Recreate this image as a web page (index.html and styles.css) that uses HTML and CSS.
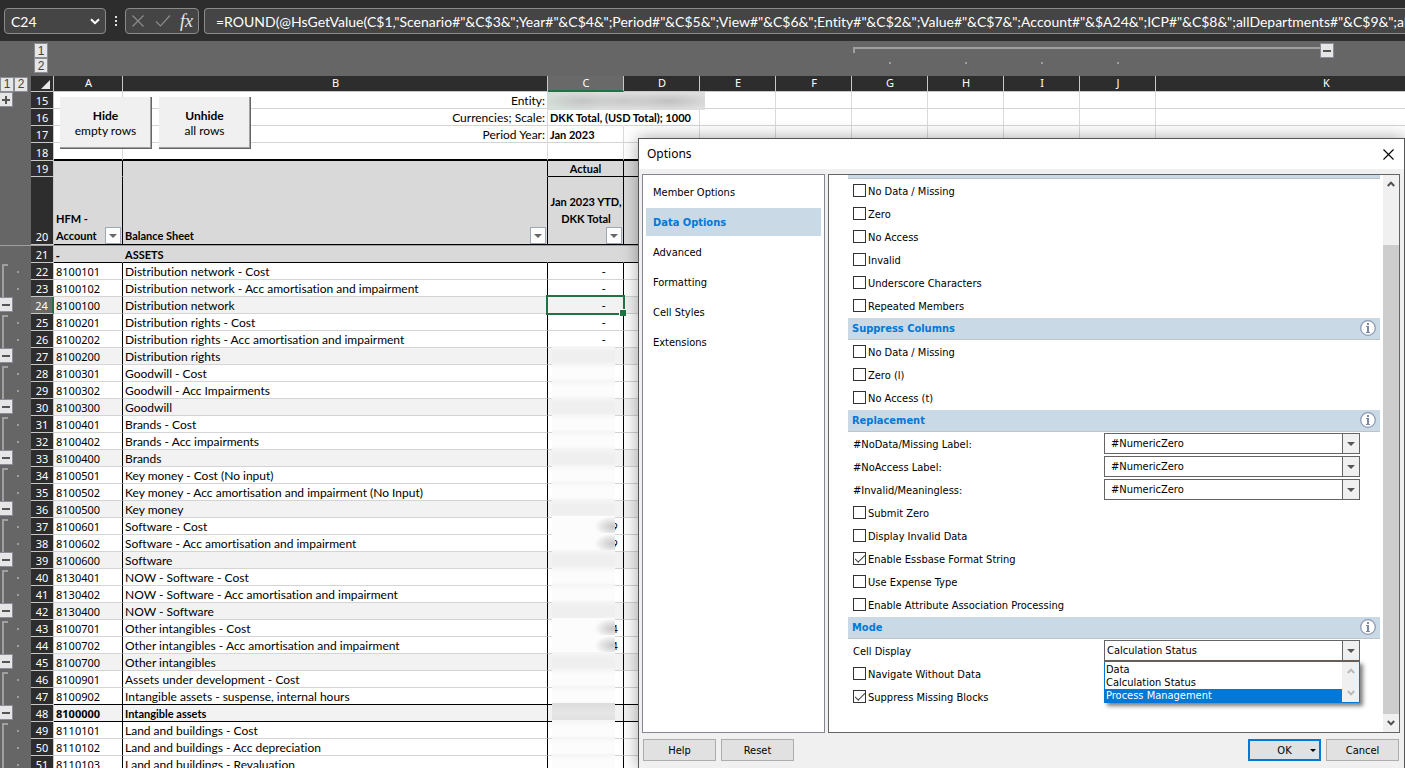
FILE: index.html
```html
<!DOCTYPE html>
<html lang="en">
<head>
<meta charset="utf-8">
<title>Balance Sheet - Options</title>
<link rel="stylesheet" href="styles.css">
</head>
<body>
<svg class="defs" aria-hidden="true">
  <symbol id="info" viewBox="0 0 16 16"><circle cx="8" cy="8" r="7.3" fill="#fff" stroke="#8f9bb3" stroke-width="1.3"/><path d="M7 3h2v2H7zM6 6h3v6h1v1H6v-1h1V7H6z" fill="#7b88a6"/></symbol>
  <symbol id="up" viewBox="0 0 8 6"><path d="M0.8 5L4 1.6L7.2 5" fill="none" stroke="currentColor" stroke-width="2"/></symbol>
  <symbol id="down" viewBox="0 0 8 6"><path d="M0.8 1L4 4.4L7.2 1" fill="none" stroke="currentColor" stroke-width="2"/></symbol>
</svg>
<div class="app">
<header class="formula-bar">
  <div class="box name-box"><input type="text" value="C24" aria-label="Name box"><svg width="10" height="7" viewBox="0 0 10 7"><path d="M1 1.2L5 5.2L9 1.2" fill="none" stroke="#fff" stroke-width="2"/></svg></div>
  <svg class="grip" width="3" height="12" viewBox="0 0 3 12"><path d="M0 0h2v2H0zM0 4h2v2H0zM0 8h2v2H0z" fill="#e0e0e0"/></svg>
  <div class="box fx-box">
    <button type="button" aria-label="Cancel entry"><svg width="14" height="14" viewBox="0 0 14 14"><path d="M1.5 1.5L12.5 12.5M12.5 1.5L1.5 12.5" stroke="#8c8c8c" stroke-width="1.2"/></svg></button>
    <button type="button" aria-label="Enter"><svg width="16" height="14" viewBox="0 0 16 14"><path d="M1 7.5L5.5 12L15 1.5" fill="none" stroke="#8c8c8c" stroke-width="1.2"/></svg></button>
    <button type="button" class="fx">fx</button>
  </div>
  <div class="box formula"><input type="text" aria-label="Formula" value="=ROUND(@HsGetValue(C$1,&quot;Scenario#&quot;&amp;C$3&amp;&quot;;Year#&quot;&amp;C$4&amp;&quot;;Period#&quot;&amp;C$5&amp;&quot;;View#&quot;&amp;C$6&amp;&quot;;Entity#&quot;&amp;C$2&amp;&quot;;Value#&quot;&amp;C$7&amp;&quot;;Account#&quot;&amp;$A24&amp;&quot;;ICP#&quot;&amp;C$8&amp;&quot;;allDepartments#&quot;&amp;C$9&amp;&quot;;allMovements"></div>
</header>

<main class="sheet">
<table class="grid">
<colgroup><col class="w-gut"><col class="w-num"><col class="w-a"><col class="w-b"><col class="w-c"><col class="w-c"><col class="w-c"><col class="w-c"><col class="w-c"><col class="w-c"><col class="w-c"><col class="w-c"><col class="w-k"></colgroup>
<thead>
<tr class="levels"><td></td><td><button type="button" class="lvl">1</button><button type="button" class="lvl">2</button></td><td></td><td></td><td></td><td></td><td></td><td></td><td class="span first"></td><td class="span"></td><td class="span"></td><td class="span"></td><td class="span-end"><button type="button" class="lvl minus" aria-label="Collapse columns"></button></td></tr>
<tr class="cols"><td class="row-levels"><button type="button" class="lvl">1</button><button type="button" class="lvl">2</button></td><th class="corner"><svg width="9" height="9" viewBox="0 0 9 9"><path d="M9 0V9H0z" fill="#e8e8e8"/></svg></th><th>A</th><th>B</th><th class="sel">C</th><th>D</th><th>E</th><th>F</th><th>G</th><th>H</th><th>I</th><th>J</th><th>K</th></tr>
</thead>
<tbody>
<tr><td class="gut"><button type="button" class="lvl plus" aria-label="Expand rows"></button></td><th>15</th><td></td><td class="right">Entity:</td><td class="masked-cell"><span class="mask-entity"></span></td><td></td><td></td><td></td><td></td><td></td><td></td><td></td><td></td></tr>
<tr><td class="gut"></td><th>16</th><td></td><td class="right">Currencies; Scale:</td><td class="strong spill">DKK Total, (USD Total); 1000</td><td></td><td></td><td></td><td></td><td></td><td></td><td></td><td></td></tr>
<tr><td class="gut"></td><th>17</th><td></td><td class="right">Period Year:</td><td class="strong">Jan 2023</td><td></td><td></td><td></td><td></td><td></td><td></td><td></td><td></td></tr>
<tr class="r18"><td class="gut"></td><th>18</th><td></td><td></td><td></td><td></td><td></td><td></td><td></td><td></td><td></td><td></td><td></td></tr>
<tr class="head r19"><td class="gut"></td><th>19</th><td></td><td></td><td class="mid lined">Actual</td><td class="lined"></td><td colspan="7"></td></tr>
<tr class="head r20"><td class="gut"></td><th>20</th><td><div class="title"><span>HFM -<br>Account</span><button type="button" class="filter" aria-label="Filter account"></button></div></td><td><div class="title"><span>Balance Sheet</span><button type="button" class="filter" aria-label="Filter balance sheet"></button></div></td><td class="mid"><div class="stack"><span>Jan 2023 YTD,<br>DKK Total</span><button type="button" class="filter" aria-label="Filter actual"></button></div></td><td></td><td colspan="7"></td></tr>
<tr class="freeze"><td colspan="13"></td></tr>
<tr class="section"><td class="gut"></td><th>21</th><td>-</td><td>ASSETS</td><td></td><td></td><td colspan="7"></td></tr>
<tr><td class="gut s"></td><th>22</th><td>8100101</td><td>Distribution network - Cost</td><td>-</td><td></td><td colspan="7"></td></tr>
<tr><td class="gut m"></td><th>23</th><td>8100102</td><td>Distribution network - Acc amortisation and impairment</td><td>-</td><td></td><td colspan="7"></td></tr>
<tr class="sub current"><td class="gut"><button type="button" class="lvl minus" aria-label="Collapse"></button></td><th>24</th><td>8100100</td><td>Distribution network</td><td class="active">-</td><td></td><td colspan="7"></td></tr>
<tr><td class="gut s"></td><th>25</th><td>8100201</td><td>Distribution rights - Cost</td><td>-</td><td></td><td colspan="7"></td></tr>
<tr><td class="gut m"></td><th>26</th><td>8100202</td><td>Distribution rights - Acc amortisation and impairment</td><td>-</td><td></td><td colspan="7"></td></tr>
<tr class="sub"><td class="gut"><button type="button" class="lvl minus" aria-label="Collapse"></button></td><th>27</th><td>8100200</td><td>Distribution rights</td><td><span class="mask"></span></td><td></td><td colspan="7"></td></tr>
<tr><td class="gut s"></td><th>28</th><td>8100301</td><td>Goodwill - Cost</td><td><span class="mask"></span></td><td></td><td colspan="7"></td></tr>
<tr><td class="gut m"></td><th>29</th><td>8100302</td><td>Goodwill - Acc Impairments</td><td><span class="mask"></span></td><td></td><td colspan="7"></td></tr>
<tr class="sub"><td class="gut"><button type="button" class="lvl minus" aria-label="Collapse"></button></td><th>30</th><td>8100300</td><td>Goodwill</td><td><span class="mask"></span></td><td></td><td colspan="7"></td></tr>
<tr><td class="gut s"></td><th>31</th><td>8100401</td><td>Brands - Cost</td><td><span class="mask"></span></td><td></td><td colspan="7"></td></tr>
<tr><td class="gut m"></td><th>32</th><td>8100402</td><td>Brands - Acc impairments</td><td><span class="mask"></span></td><td></td><td colspan="7"></td></tr>
<tr class="sub"><td class="gut"><button type="button" class="lvl minus" aria-label="Collapse"></button></td><th>33</th><td>8100400</td><td>Brands</td><td><span class="mask"></span></td><td></td><td colspan="7"></td></tr>
<tr><td class="gut s"></td><th>34</th><td>8100501</td><td>Key money - Cost (No input)</td><td><span class="mask"></span></td><td></td><td colspan="7"></td></tr>
<tr><td class="gut m"></td><th>35</th><td>8100502</td><td>Key money - Acc amortisation and impairment (No Input)</td><td><span class="mask"></span></td><td></td><td colspan="7"></td></tr>
<tr class="sub"><td class="gut"><button type="button" class="lvl minus" aria-label="Collapse"></button></td><th>36</th><td>8100500</td><td>Key money</td><td><span class="mask"></span></td><td></td><td colspan="7"></td></tr>
<tr><td class="gut s"></td><th>37</th><td>8100601</td><td>Software - Cost</td><td class="val"><span class="mask smudge"></span>9</td><td></td><td colspan="7"></td></tr>
<tr><td class="gut m"></td><th>38</th><td>8100602</td><td>Software - Acc amortisation and impairment</td><td class="val"><span class="mask smudge"></span>9</td><td></td><td colspan="7"></td></tr>
<tr class="sub"><td class="gut"><button type="button" class="lvl minus" aria-label="Collapse"></button></td><th>39</th><td>8100600</td><td>Software</td><td><span class="mask"></span></td><td></td><td colspan="7"></td></tr>
<tr><td class="gut s"></td><th>40</th><td>8130401</td><td>NOW - Software - Cost</td><td><span class="mask"></span></td><td></td><td colspan="7"></td></tr>
<tr><td class="gut m"></td><th>41</th><td>8130402</td><td>NOW - Software - Acc amortisation and impairment</td><td><span class="mask"></span></td><td></td><td colspan="7"></td></tr>
<tr class="sub"><td class="gut"><button type="button" class="lvl minus" aria-label="Collapse"></button></td><th>42</th><td>8130400</td><td>NOW - Software</td><td><span class="mask"></span></td><td></td><td colspan="7"></td></tr>
<tr><td class="gut s"></td><th>43</th><td>8100701</td><td>Other intangibles - Cost</td><td class="val"><span class="mask smudge"></span>4</td><td></td><td colspan="7"></td></tr>
<tr><td class="gut m"></td><th>44</th><td>8100702</td><td>Other intangibles - Acc amortisation and impairment</td><td class="val"><span class="mask smudge"></span>4</td><td></td><td colspan="7"></td></tr>
<tr class="sub"><td class="gut"><button type="button" class="lvl minus" aria-label="Collapse"></button></td><th>45</th><td>8100700</td><td>Other intangibles</td><td><span class="mask"></span></td><td></td><td colspan="7"></td></tr>
<tr><td class="gut s"></td><th>46</th><td>8100901</td><td>Assets under development - Cost</td><td><span class="mask"></span></td><td></td><td colspan="7"></td></tr>
<tr class="before-total"><td class="gut m"></td><th>47</th><td>8100902</td><td>Intangible assets - suspense, internal hours</td><td><span class="mask"></span></td><td></td><td colspan="7"></td></tr>
<tr class="sub total"><td class="gut"><button type="button" class="lvl minus" aria-label="Collapse"></button></td><th>48</th><td>8100000</td><td>Intangible assets</td><td><span class="mask"></span></td><td></td><td colspan="7"></td></tr>
<tr><td class="gut s"></td><th>49</th><td>8110101</td><td>Land and buildings - Cost</td><td><span class="mask"></span></td><td></td><td colspan="7"></td></tr>
<tr><td class="gut m"></td><th>50</th><td>8110102</td><td>Land and buildings - Acc depreciation</td><td><span class="mask"></span></td><td></td><td colspan="7"></td></tr>
<tr><td class="gut m"></td><th>51</th><td>8110103</td><td>Land and buildings - Revaluation</td><td><span class="mask"></span></td><td></td><td colspan="7"></td></tr>
</tbody>
</table>
<div class="macros">
  <button type="button"><b>Hide</b><span>empty rows</span></button>
  <button type="button"><b>Unhide</b><span>all rows</span></button>
</div>
</main>

<section class="dialog" role="dialog" aria-labelledby="dlg-title">
  <div class="titlebar"><h1 id="dlg-title">Options</h1><button type="button" aria-label="Close"><svg width="11" height="11" viewBox="0 0 11 11"><path d="M.5 .5L10.500 10.500M10.500 .5L.5 10.500" stroke="#000" stroke-width="1.1"/></svg></button></div>
  <div class="panes">
    <nav class="tabs">
      <button type="button">Member Options</button>
      <button type="button" class="on">Data Options</button>
      <button type="button">Advanced</button>
      <button type="button">Formatting</button>
      <button type="button">Cell Styles</button>
      <button type="button">Extensions</button>
    </nav>
    <div class="pane">
      <div class="content">
        <div class="band-edge"></div>
        <label class="opt"><input type="checkbox"><span>No Data / Missing</span></label>
        <label class="opt"><input type="checkbox"><span>Zero</span></label>
        <label class="opt"><input type="checkbox"><span>No Access</span></label>
        <label class="opt"><input type="checkbox"><span>Invalid</span></label>
        <label class="opt"><input type="checkbox"><span>Underscore Characters</span></label>
        <label class="opt"><input type="checkbox"><span>Repeated Members</span></label>
        <div class="band"><h2>Suppress Columns</h2><svg class="info"><use href="#info"/></svg></div>
        <label class="opt"><input type="checkbox"><span>No Data / Missing</span></label>
        <label class="opt"><input type="checkbox"><span>Zero (l)</span></label>
        <label class="opt"><input type="checkbox"><span>No Access (t)</span></label>
        <div class="band"><h2>Replacement</h2><svg class="info"><use href="#info"/></svg></div>
        <div class="field"><label for="nodata">#NoData/Missing Label:</label><div class="combo"><select id="nodata" class="inset"><option>#NumericZero</option></select></div></div>
        <div class="field"><label for="noaccess">#NoAccess Label:</label><div class="combo"><select id="noaccess" class="inset"><option>#NumericZero</option></select></div></div>
        <div class="field"><label for="invalid">#Invalid/Meaningless:</label><div class="combo"><select id="invalid" class="inset"><option>#NumericZero</option></select></div></div>
        <label class="opt"><input type="checkbox"><span>Submit Zero</span></label>
        <label class="opt"><input type="checkbox"><span>Display Invalid Data</span></label>
        <label class="opt"><input type="checkbox" checked><span>Enable Essbase Format String</span></label>
        <label class="opt"><input type="checkbox"><span>Use Expense Type</span></label>
        <label class="opt"><input type="checkbox"><span>Enable Attribute Association Processing</span></label>
        <div class="band"><h2>Mode</h2><svg class="info"><use href="#info"/></svg></div>
        <div class="field"><label for="display">Cell Display</label><div class="combo"><select id="display"><option>Calculation Status</option></select>
          <div class="dropdown"><ul role="listbox" aria-label="Cell Display"><li role="option">Data</li><li role="option">Calculation Status</li><li role="option" aria-selected="true">Process Management</li></ul><div class="mini-scroll"><svg><use href="#up"/></svg><svg><use href="#down"/></svg></div></div></div></div>
        <label class="opt"><input type="checkbox"><span>Navigate Without Data</span></label>
        <label class="opt"><input type="checkbox" checked><span>Suppress Missing Blocks</span></label>
      </div>
      <div class="scrollbar"><svg><use href="#up"/></svg><div class="thumb"></div><svg><use href="#down"/></svg></div>
    </div>
  </div>
  <footer class="actions">
    <button type="button">Help</button><button type="button">Reset</button>
    <span class="spacer"></span>
    <button type="button" class="ok">OK</button><button type="button">Cancel</button>
  </footer>
</section>
</div>
</body>
</html>
```
FILE: styles.css
```css
* { box-sizing: border-box; }
body { margin: 0; background: #666; color: #000; overflow: hidden; }
button, input, select { font: inherit; color: inherit; margin: 0; }
.defs { display: none; }
.app { position: relative; height: 100vh; display: flex; flex-direction: column; overflow: hidden; font-variant-ligatures: none; }

/* Formula bar */
.formula-bar { flex: none; display: flex; align-items: center; gap: 5px; height: 41px; padding: 1px 0 0 4px; background: #2d2d2d; color: #fff; font: 14px Lato, sans-serif; font-variant-ligatures: none; }
.box { display: flex; align-items: center; height: 26px; border: 1px solid #8a8a8a; border-radius: 4px; background: #454545; }
.box input { width: 100%; min-width: 0; border: 0; padding: 0; background: none; outline: 0; font-variant-ligatures: none; }
.name-box { width: 102px; padding: 0 5px 0 6px; }
.name-box svg { flex: none; }
.grip { flex: none; margin: 2px 2px 0 4px; }
.fx-box { width: 74px; padding: 0 5px; justify-content: space-between; }
.fx-box button { display: flex; border: 0; padding: 0; background: none; }
.fx-box .fx { color: #e8e8e8; font: italic 18px/22px "Liberation Serif", serif; }
.formula { flex: 1; min-width: 0; border-right: 0; border-radius: 4px 0 0 4px; padding-left: 11px; }

/* Worksheet */
.sheet { flex: 1; position: relative; overflow: hidden; background: #666; }
.grid { width: 1497px; table-layout: fixed; border-collapse: separate; border-spacing: 0; font: 12px/15px Lato, sans-serif; font-variant-ligatures: none; }
.w-gut { width: 31px; }
.w-num { width: 23px; }
.w-a { width: 69px; }
.w-b { width: 425px; }
.w-c { width: 76px; }
.w-k { width: 341px; }
.grid td { height: 17px; padding: 0 2px 0 2px; border-right: 1px solid #dadada; border-bottom: 1px solid #d4d4d4; background: #fff; white-space: nowrap; }
.grid th { height: 17px; padding: 0; border-right: 1px solid #c8c8c8; border-bottom: 1px solid #c8c8c8; background: #2d2d2d; color: #fff; font: 11px/14px "Noto Sans", sans-serif; vertical-align: bottom; }
.lvl { display: block; width: 14px; height: 15px; padding: 0; border: 1px solid #8a8d96; background: #e6e6e6; color: #444; font: 12px/12px "Liberation Sans", sans-serif; text-align: center; }
.lvl.minus { background: linear-gradient(#555, #555) center / 8px 2px no-repeat #e6e6e6; }
.lvl.plus { background: linear-gradient(#555, #555) center / 8px 2px no-repeat, linear-gradient(#555, #555) center / 2px 8px no-repeat #e6e6e6; }

.grid .levels td { height: 35px; padding: 2px 0 0 3px; border: 0; background: #666; vertical-align: top; }
.grid .levels td.span { background: linear-gradient(#a0a0a0, #a0a0a0) 0 6px / 100% 2px no-repeat, linear-gradient(#a0a0a0, #a0a0a0) 50% 21px / 2px 2px no-repeat #666; }
.grid .levels td.first { background: linear-gradient(#a0a0a0, #a0a0a0) 1px 6px / 100% 2px no-repeat, linear-gradient(#a0a0a0, #a0a0a0) 1px 6px / 2px 6px no-repeat, linear-gradient(#a0a0a0, #a0a0a0) 50% 21px / 2px 2px no-repeat #666; }
.grid .levels td.span-end { padding: 2px 0 0; background: linear-gradient(#a0a0a0, #a0a0a0) 0 6px / 50% 2px no-repeat #666; }
.span-end .lvl { margin: 0 auto; }
.grid .cols td { border: 0; background: #666; padding: 0; }
.grid .cols td, .grid .cols th { height: 16px; }
.grid .cols th { padding-left: 1px; line-height: 13px; vertical-align: top; }
.row-levels .lvl { float: left; }
.grid .cols th.sel { background: #696969; border-bottom: 2px solid #217346; }
.grid .cols .corner { padding: 4px 3px 0 0; line-height: 9px; }
.corner svg { display: block; margin-left: auto; }

.grid td.gut { padding: 0; border: 0; background: #666; vertical-align: top; }
.gut .lvl { width: 13px; border-left: 0; }
.grid td.gut.s { background: linear-gradient(#a0a0a0, #a0a0a0) 2px 1px / 2px 100% no-repeat, linear-gradient(#a0a0a0, #a0a0a0) 2px 1px / 6px 2px no-repeat, linear-gradient(#a0a0a0, #a0a0a0) 17px 8px / 2px 2px no-repeat #666; }
.grid td.gut.m { background: linear-gradient(#a0a0a0, #a0a0a0) 2px 0 / 2px 100% no-repeat, linear-gradient(#a0a0a0, #a0a0a0) 17px 8px / 2px 2px no-repeat #666; }

.grid .right { text-align: right; }
.grid .strong, .head td, .section td { font-size: 11px; font-weight: bold; }
.grid .spill { border-right-color: transparent; overflow: visible; }
.grid .r18 td:not(.gut) { height: 18px; border-bottom: 2px solid #000; }
.grid .head td:not(.gut) { background: #d9d9d9; border-right-color: #000; border-bottom-color: #d9d9d9; }
.grid .r19 td, .grid .r19 th { height: 16px; }
.grid .head td.lined { border-bottom-color: #000; }
.mid { text-align: center; }
.grid .r20 td:not(.gut) { height: 68px; padding: 0 1px 0 2px; border-bottom-color: #000; vertical-align: bottom; }
.title { display: flex; align-items: flex-end; justify-content: space-between; line-height: 17px; }
.stack { display: flex; flex-direction: column; align-items: center; line-height: 17px; }
.filter { flex: none; width: 16px; height: 17px; padding: 0; border: 1px solid #a0a7b4; background: #fcfcfc; display: grid; place-items: center; }
.filter::after { content: ""; border: 4px solid transparent; border-top-color: #666; border-bottom: 0; }
.stack .filter { align-self: flex-end; }
.grid .freeze td { height: 1px; padding: 0; border: 0; background: #a0a0a0; }
.grid .section td:not(.gut) { background: #d9d9d9; border-right-color: #d9d9d9; border-bottom-color: #000; }

.freeze ~ tr td:nth-child(3) { font-family: "Noto Sans", sans-serif; font-size: 11px; }
.grid .freeze ~ tr:not(.section) td:nth-child(n+3) { border-right-color: #000; }
.freeze ~ tr td:nth-child(5) { position: relative; text-align: right; }
.grid .freeze ~ tr td:nth-child(5) { padding-right: 17px; }
.grid .freeze ~ tr td.val { padding-right: 5px; font-size: 11px; }
.grid .sub td:not(.gut) { background: #f2f2f2; }
.grid .current th { background: #696969; border-right: 2px solid #217346; }
.active::after { content: ""; position: absolute; inset: -2px; border: 2px solid #217346; z-index: 1; }
.active::before { content: ""; position: absolute; right: -3px; bottom: -3px; width: 6px; height: 6px; background: #217346; border: 1px solid #fff; border-width: 1px 0 0 1px; z-index: 2; }
.grid .before-total td:not(.gut), .grid .total td:not(.gut) { border-bottom-color: #000; }
.total td { font-size: 11px; font-weight: bold; }

/* Obscured values */
.mask { position: absolute; left: 4px; right: 8px; top: -2px; bottom: -3px; background: linear-gradient(#f4f4f4, #fcfcfc 30%, #fcfcfc 70%, #f4f4f4); }
.sub .mask { background: linear-gradient(#f6f6f6, #efefef 30%, #efefef 70%, #f6f6f6); }
.total .mask { background: linear-gradient(#ddd, #e6e6e6 50%, #ddd); }
.mask.smudge { background: radial-gradient(ellipse 18px 10px at 96% 50%, #c8c8c8, #dedede 45%, #fcfcfc); }
.masked-cell { position: relative; }
.mask-entity { position: absolute; z-index: 1; left: 0; top: 0; width: 157px; height: 18px; background: radial-gradient(ellipse 38px 9px at 34px 9px, #c4c4c4, transparent), radial-gradient(ellipse 34px 9px at 76px 9px, #c8c8c8, transparent), radial-gradient(ellipse 46px 9px at 120px 9px, #c0c0c0, transparent), linear-gradient(100deg, #d3dfd8, #dedede 50%); }

/* Macro buttons lie over the cells */
.macros { position: absolute; left: 60px; top: 56px; display: flex; gap: 7px; font: 12px/15px Lato, sans-serif; }
.macros button { display: flex; flex-direction: column; align-items: center; justify-content: center; width: 92px; height: 52px; padding: 0; border: 0; border-right: 1px solid #666; border-bottom: 1px solid #666; box-shadow: inset -1px -1px #a0a0a0; background: #f0f0f0; }

/* Options dialog */
.dialog { position: absolute; top: 138px; right: 0; bottom: 0; width: 767px; display: flex; flex-direction: column; border: 1px solid #555; border-bottom: 0; background: #f0f0f0; box-shadow: 0 0 16px rgba(0, 0, 0, .35); font: 11px/14px "DejaVu Sans Condensed", "DejaVu Sans", sans-serif; z-index: 5; }
.titlebar { display: flex; align-items: center; justify-content: space-between; height: 30px; padding: 0 10px 0 8px; background: #fff; }
.titlebar h1 { margin: 0; font: 12px/16px "Noto Sans", sans-serif; }
.titlebar button { display: flex; border: 0; padding: 0; background: none; }
.panes { flex: 1; min-height: 0; display: flex; gap: 3px; padding: 5px 4px 0 3px; }
.tabs { width: 183px; display: flex; flex-direction: column; gap: 2px; padding: 3px; border: 1px solid #828790; background: #fff; }
.tabs button { height: 28px; padding: 2px 7px 0; border: 0; background: none; text-align: left; }
.tabs .on { background: #c9d9e6; color: #0078d7; font-weight: bold; }
.pane { flex: 1; min-width: 0; display: flex; gap: 3px; border: 1px solid #646464; background: #fff; }
.content { flex: 1; padding-left: 19px; }
.band-edge { height: 4px; background: #c9d9e6; border-bottom: 1px solid #bfc4c9; }
.band { display: flex; align-items: flex-start; justify-content: space-between; height: 22px; margin-top: 1px; padding: 2px 4px 0; background: #c9d9e6; border-bottom: 1px solid #bfc4c9; }
.band h2 { margin: 0; padding-top: 2px; font-size: 11px; color: #0078d7; }
.info { width: 16px; height: 16px; }
.opt { display: flex; align-items: center; gap: 2px; height: 23px; padding-left: 5px; }
.opt span, .field label { padding-top: 2px; }
.opt input { appearance: none; width: 13px; height: 13px; border: 1px solid #333; background: #fff; display: grid; place-items: center; }
.opt input:checked::after { content: ""; width: 9px; height: 4px; margin-top: -3px; border: solid #444; border-width: 0 0 1px 1px; transform: rotate(-45deg); }
.field { display: flex; align-items: center; justify-content: space-between; height: 23px; padding: 0 20px 0 5px; }
.combo { position: relative; width: 256px; height: 21px; }
.combo select { appearance: none; display: block; width: 100%; height: 21px; padding: 0 20px 0 2px; border: 1px solid #646464; border-radius: 0; background: linear-gradient(#646464, #646464) right 16px top / 1px 100% no-repeat, linear-gradient(#f0f0f0, #f0f0f0) right / 16px 100% no-repeat #fff; }
.combo .inset { padding-left: 6px; }
.combo::after { content: ""; position: absolute; right: 5px; top: 9px; border: 4px solid transparent; border-top-color: #555; border-bottom: 0; pointer-events: none; }
.dropdown { position: absolute; left: 0; right: 0; top: 21px; display: flex; border: 1px solid #0078d7; background: #fff; box-shadow: 3px 3px 4px rgba(0, 0, 0, .5); z-index: 2; }
.dropdown ul { flex: 1; margin: 0; padding: 1px 0 0; list-style: none; line-height: 13px; }
.dropdown li { padding-left: 1px; }
.dropdown li[aria-selected] { background: #0078d7; color: #fff; }
.mini-scroll { display: flex; flex-direction: column; align-items: center; justify-content: space-between; width: 17px; padding: 6px 0; background: #f0f0f0; color: #b8b8b8; }
.mini-scroll svg, .scrollbar svg { flex: none; width: 8px; height: 6px; }
.scrollbar { display: flex; flex-direction: column; align-items: center; justify-content: space-between; width: 16px; padding: 6px 0; background: #f0f0f0; color: #505050; }
.thumb { width: 100%; flex: 1; margin: 58px 0 6px; background: #cdcdcd; }
.actions { display: flex; gap: 5px; height: 35px; padding: 6px 5px 7px 4px; }
.actions button { width: 73px; height: 22px; padding: 1px 0 0; border: 1px solid #adadad; background: #e1e1e1; }
.spacer { flex: 1; }
.actions .ok { position: relative; border: 2px solid #0078d7; }
.ok::after { content: ""; position: absolute; right: 3px; top: 8px; border: 3px solid transparent; border-top-color: #000; border-bottom: 0; }
```
